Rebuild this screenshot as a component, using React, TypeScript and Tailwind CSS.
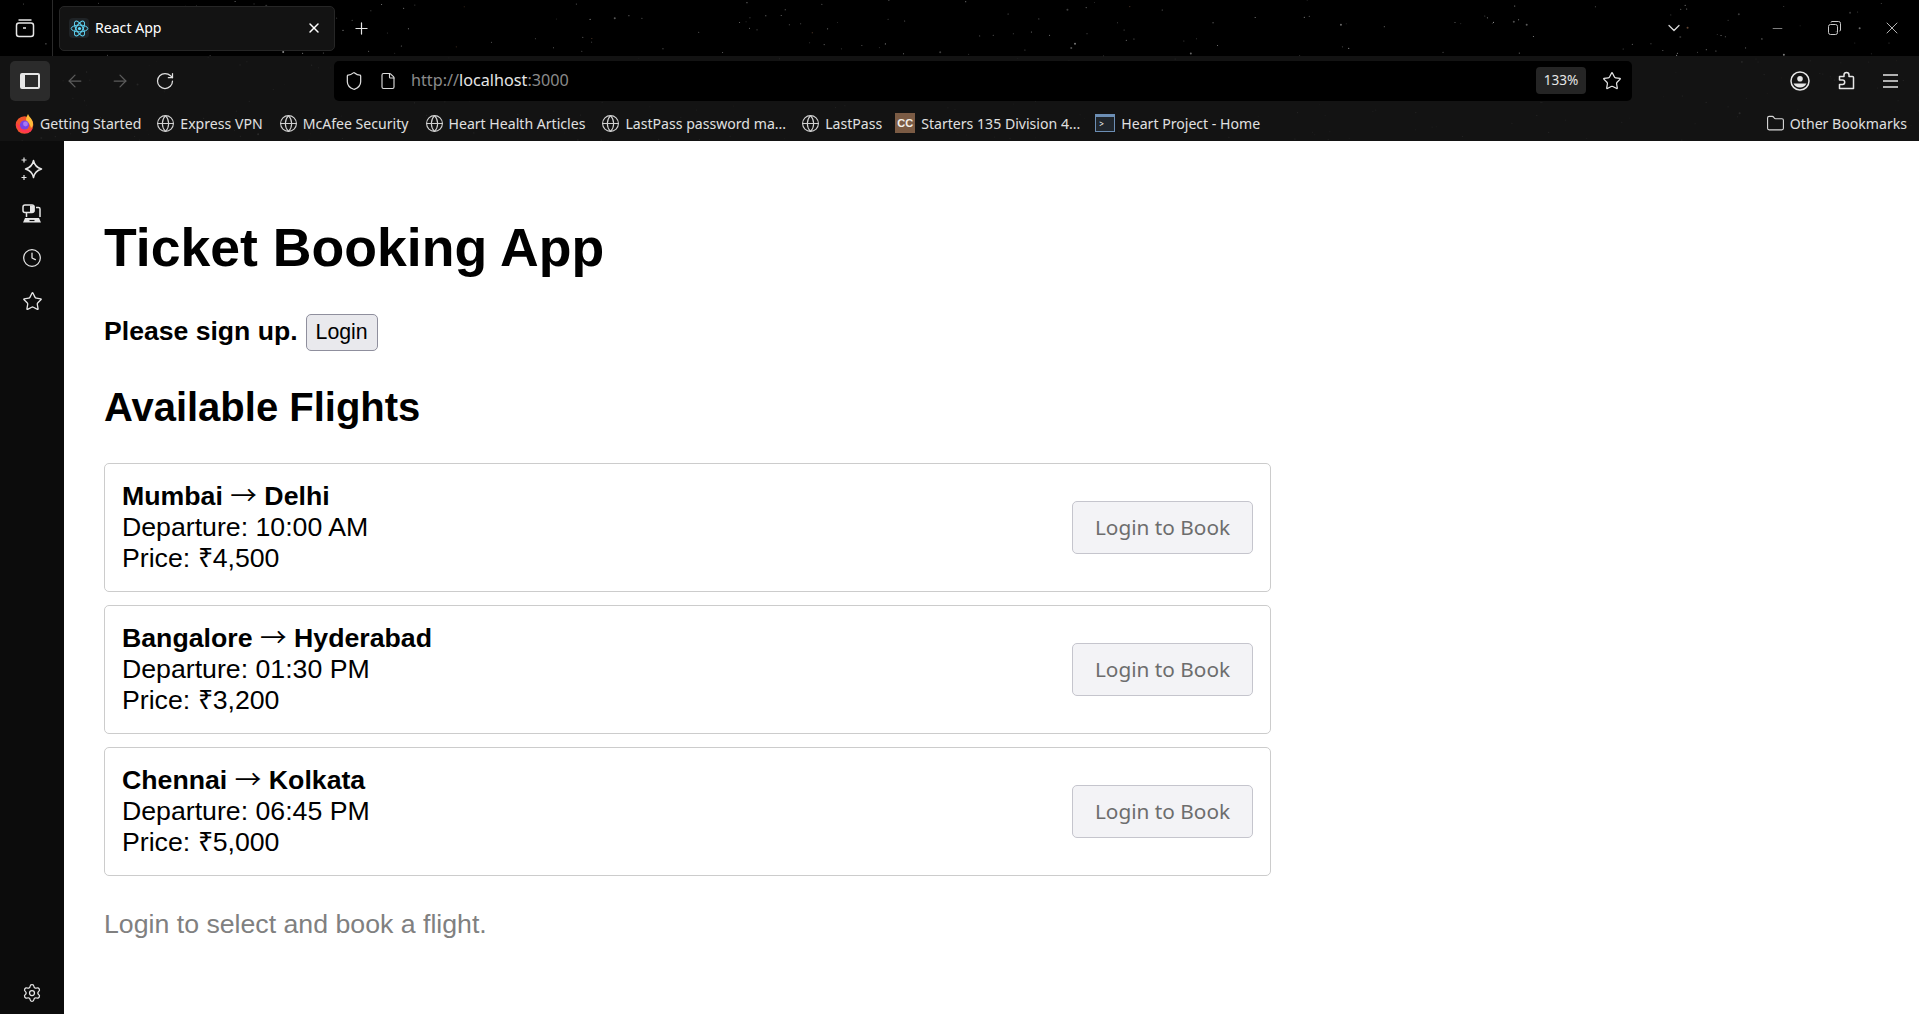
import React from "react";
import {
  ArrowLeft,
  ArrowRight,
  ChevronDown,
  Clock,
  File,
  Folder,
  Globe,
  Minus,
  Plus,
  RotateCw,
  Settings,
  Shield,
  Star,
  X,
} from "lucide-react";

const FLIGHTS = [
  { from: "Mumbai", to: "Delhi", time: "10:00 AM", price: "₹4,500" },
  { from: "Bangalore", to: "Hyderabad", time: "01:30 PM", price: "₹3,200" },
  { from: "Chennai", to: "Kolkata", time: "06:45 PM", price: "₹5,000" },
];

const BOOKMARKS = [
  { label: "Express VPN", gap: "ml-[15px]" },
  { label: "McAfee Security", gap: "ml-[16px]" },
  { label: "Heart Health Articles", gap: "ml-[16px]" },
  { label: "LastPass password ma...", gap: "ml-[16px]" },
  { label: "LastPass", gap: "ml-[15px]" },
];

// deterministic starfield for the browser theme
function stars() {
  const out: { x: number; y: number; r: number; o: number; warm: boolean }[] = [];
  let seed = 1337;
  const rnd = () => {
    seed = (seed * 16807) % 2147483647;
    return seed / 2147483647;
  };
  for (let i = 0; i < 420; i++) {
    out.push({
      x: rnd() * 1919,
      y: rnd() * 141,
      r: rnd() > 0.92 ? 1 : 0.55,
      o: 0.15 + rnd() * 0.45,
      warm: rnd() > 0.95,
    });
  }
  return out;
}

function Starfield() {
  return (
    <svg className="absolute inset-0 w-full h-[141px]" viewBox="0 0 1919 141">
      {stars().map((s, i) => (
        <circle key={i} cx={s.x} cy={s.y} r={s.r} fill={s.warm ? "#e09a70" : "#ffffff"} opacity={s.o} />
      ))}
    </svg>
  );
}

function ReactLogo() {
  return (
    <div className="w-5 h-5 rounded bg-[#1f2326] flex items-center justify-center shrink-0">
      <svg width="19" height="19" viewBox="-12 -12 24 24" fill="none" stroke="#61dafb" strokeWidth="1.2">
        <circle r="2" fill="#61dafb" stroke="none" />
        <ellipse rx="10.5" ry="4.2" />
        <ellipse rx="10.5" ry="4.2" transform="rotate(60)" />
        <ellipse rx="10.5" ry="4.2" transform="rotate(120)" />
      </svg>
    </div>
  );
}

function FirefoxLogo() {
  return (
    <svg width="19" height="21" viewBox="0 0 19 21" className="shrink-0">
      <circle cx="9.5" cy="12" r="8.8" fill="#f2552c" />
      <path d="M13 1c1 3 5 5 5 10 0 2-1 3-2 4-1-5-4-6-5-8 0-2 1-4 2-6z" fill="#ffbd3a" />
      <path d="M1 10c1 6 5 10 10 10 3 0 6-2 7-5-3 3-9 3-12-1-2-2-3-3-5-4z" fill="#ff3750" />
      <circle cx="9.5" cy="12" r="4.6" fill="#7542e5" />
      <circle cx="10.5" cy="11" r="2.4" fill="#a678f5" />
    </svg>
  );
}

function SyncedTabsIcon() {
  return (
    <svg width="20" height="20" viewBox="0 0 20 20" fill="none" stroke="#e6e6e6" strokeWidth="1.5">
      <rect x="1" y="1" width="11" height="7.500" rx="2" />
      <path d="M8 1.500h3.500a1 1 0 0 1 1 1v4.500a1 1 0 0 1-1 1H8z" fill="#e6e6e6" stroke="none" />
      <path d="M14 3.500h2.500a1.500 1.500 0 0 1 1.500 1.500v8" />
      <path d="M4.500 9v4" />
      <path d="M3 14h14l2 4.500H1z" fill="#e6e6e6" stroke="none" />
      <path d="M7.500 16.500h5" stroke="#0c0c0c" strokeWidth="1.200" />
    </svg>
  );
}

function AiIcon() {
  return (
    <svg width="22" height="24" viewBox="0 0 22 24" fill="none" stroke="#e6e6e6" strokeWidth="1.500" strokeLinejoin="round">
      <path d="M12.500 3.500c.8 4.200 2.800 7 8 8.500-5.200 1.500-7.200 4.300-8 8.500-.8-4.200-2.800-7-8-8.500 5.200-1.500 7.200-4.300 8-8.500z" />
      <path d="M3 .5v5M.5 3h5M3 18v5M.5 20.500h5" strokeWidth="1.200" />
    </svg>
  );
}

function AccountIcon() {
  return (
    <svg width="20" height="20" viewBox="0 0 20 20" fill="none" className="shrink-0">
      <circle cx="10" cy="10" r="9" stroke="#e6e6e6" strokeWidth="1.500" />
      <circle cx="10" cy="7.800" r="2.800" fill="#e6e6e6" />
      <path d="M3.500 12.500h13a7.200 7.200 0 0 1-13 0z" fill="#e6e6e6" />
    </svg>
  );
}

function PuzzleIcon() {
  return (
    <svg width="17" height="19" viewBox="0 0 17 19" fill="none" stroke="#e6e6e6" strokeWidth="1.500" strokeLinejoin="round" className="shrink-0">
      <path d="M1.500 17.500v-4h3a2.200 2.200 0 0 0 0-4.400h-3V5.500H6V4a2.500 2.500 0 0 1 5 0v1.500h3.500a1 1 0 0 1 1 1v11z" />
    </svg>
  );
}

function MenuIcon() {
  return (
    <svg width="15" height="14" viewBox="0 0 15 14" stroke="#e6e6e6" strokeWidth="1.500" className="shrink-0">
      <path d="M0 1h15M0 7h15M0 13h15" />
    </svg>
  );
}

function RestoreIcon() {
  return (
    <svg width="13" height="14" viewBox="0 0 13 14" fill="none" stroke="#c8c8c8" strokeWidth="1">
      <rect x="0.500" y="3.500" width="9" height="10" rx="2" />
      <path d="M3 1.500 a1 1 0 0 1 1-1h6.500a2 2 0 0 1 2 2V9a1 1 0 0 1-1 1" />
    </svg>
  );
}

function Bookmark({ label, gap }: { label: string; gap: string }) {
  return (
    <div className={`flex items-center gap-[5px] ${gap}`}>
      <Globe size={19} strokeWidth={1.400} className="text-[#d0d0d0] shrink-0" />
      <span className="whitespace-nowrap">{label}</span>
    </div>
  );
}

function FlightCard({ from, to, time, price }: { from: string; to: string; time: string; price: string }) {
  return (
    <div className="flex items-center justify-between h-[129px] border border-[#cccccc] rounded-[5px] px-[17px] mb-[13px]">
      <div className="text-[26.7px] leading-[31px] text-black">
        <div className="font-bold">
          {from} <span className="font-['Noto_Sans_CJK_SC',sans-serif] font-normal leading-[0]">→</span> {to}
        </div>
        <div>Departure: {time}</div>
        <div>Price: {price}</div>
      </div>
      <button className="w-[181px] h-[53px] bg-[#f3f3f6] border border-[#c5c5cd] rounded-[5px] text-[20.800px] text-[#6d6d6d] font-['Noto_Sans',sans-serif]">
        Login to Book
      </button>
    </div>
  );
}

export default function App() {
  return (
    <div className="h-screen overflow-hidden flex flex-col bg-white font-['Liberation_Sans',Arial,sans-serif]">
      <div className="relative bg-black shrink-0 h-[141px] flex flex-col text-white font-['Noto_Sans',sans-serif]">
        <Starfield />

        {/* tab strip */}
        <div className="relative h-[56px] flex items-center shrink-0">
          <div className="w-[53px] flex justify-center pr-[2px] border-r border-[#2a2a2a] h-full items-center">
            <svg width="20" height="20" viewBox="0 0 20 20" fill="none" stroke="#e6e6e6" strokeWidth="1.500">
              <rect x="1.500" y="5" width="17" height="13.500" rx="2.500" />
              <path d="M3.500 2h13M8 10h3" />
            </svg>
          </div>
          <div className="ml-[6px] w-[276px] h-[45px] bg-[#131313] border border-[#262626] rounded-[5px] flex items-center pl-[9px] pr-[12px]">
            <ReactLogo />
            <span className="ml-[6px] text-[14.100px] text-white">React App</span>
            <X size={16} strokeWidth={2.200} className="ml-auto text-white" />
          </div>
          <Plus size={19} strokeWidth={1.500} className="ml-[17px] text-[#e6e6e6]" />
          <ChevronDown size={20} strokeWidth={1.500} className="ml-auto text-[#d8d8d8]" />
          <Minus size={15} strokeWidth={1} className="ml-[86px] text-[#c8c8c8]" />
          <div className="ml-[43px]">
            <RestoreIcon />
          </div>
          <X size={20} strokeWidth={1} className="ml-[41px] mr-[17px] text-[#d8d8d8]" />
        </div>

        {/* nav toolbar */}
        <div className="relative h-[49px] bg-[#161616]/85 flex items-center shrink-0">
          <div className="ml-[10px] w-[40px] h-[40px] bg-[#2b2b2b] rounded-[5px] flex items-center justify-center">
            <div className="w-[20px] h-[16px] border-2 border-[#e6e6e6] border-l-[5px] rounded-[2px]"></div>
          </div>
          <ArrowLeft size={20} strokeWidth={1.500} className="ml-[15px] text-[#5c5c5c]" />
          <ArrowRight size={20} strokeWidth={1.500} className="ml-[25px] text-[#5c5c5c]" />
          <RotateCw size={20} strokeWidth={1.500} className="ml-[25px] text-[#e0e0e0]" />
          <div className="ml-[159px] w-[1298px] h-[40px] bg-black rounded-[5px] flex items-center pl-[10px] pr-[10px]">
            <Shield size={20} strokeWidth={1.500} className="text-[#dcdcdc]" />
            <File size={18} strokeWidth={1.500} className="ml-[15px] text-[#dcdcdc]" />
            <span className="ml-[14px] text-[16.200px] text-[#8a8a8a]">
              http://<span className="text-[#e6e6e6]">localhost</span>:3000
            </span>
            <span className="ml-auto w-[50px] h-[27px] bg-[#252525] rounded flex items-center justify-center text-[13.600px] text-[#e6e6e6]">
              133%
            </span>
            <Star size={20} strokeWidth={1.500} className="ml-[16px] text-[#e6e6e6]" />
          </div>
          <div className="ml-auto flex items-center pr-[21px]">
            <AccountIcon />
            <div className="ml-[28px]">
              <PuzzleIcon />
            </div>
            <div className="ml-[28px]">
              <MenuIcon />
            </div>
          </div>
        </div>

        {/* bookmarks */}
        <div className="relative flex-1 bg-[#161616]/85 flex items-center pl-[15px] pr-[12px] pt-[1px] text-[14.100px] text-[#e0e0e0]">
          <div className="flex items-center gap-[6px]">
            <FirefoxLogo />
            <span className="whitespace-nowrap">Getting Started</span>
          </div>
          {BOOKMARKS.map((b) => (
            <Bookmark key={b.label} label={b.label} gap={b.gap} />
          ))}
          <div className="flex items-center gap-[6px] ml-[13px]">
            <div className="w-5 h-5 bg-[#7b5b44] text-[#f3efe9] font-['Liberation_Sans',sans-serif] font-bold text-[11px] flex items-center justify-center">
              CC
            </div>
            <span className="whitespace-nowrap">Starters 135 Division 4...</span>
          </div>
          <div className="flex items-center gap-[6px] ml-[15px]">
            <div className="w-5 h-[18px] bg-[#20262c] border-t-[3px] border-x border-b border-[#6c8eb4] flex items-center pl-[3px] text-[8px] leading-none text-white">
              &gt;
            </div>
            <span className="whitespace-nowrap">Heart Project - Home</span>
          </div>
          <div className="ml-auto flex items-center gap-[5px]">
            <Folder size={19} strokeWidth={1.400} className="text-[#d8d8d8]" />
            <span className="whitespace-nowrap">Other Bookmarks</span>
          </div>
        </div>
      </div>

      <div className="flex-1 flex min-h-0">
        <aside className="w-[64px] shrink-0 bg-[#0c0c0c] flex flex-col items-center pt-[16px] pb-[11px]">
          <div className="h-[24px] flex items-center">
            <AiIcon />
          </div>
          <div className="mt-[23px] h-[20px]">
            <SyncedTabsIcon />
          </div>
          <Clock size={20} strokeWidth={1.500} className="mt-[24px] text-[#e6e6e6]" />
          <Star size={21} strokeWidth={1.500} className="mt-[23px] text-[#e6e6e6]" />
          <Settings size={20} strokeWidth={1.500} className="mt-auto text-[#e6e6e6]" />
        </aside>

        <main className="flex-1 pl-[40px] pt-[76px]">
          <div className="w-[1167px]">
            <h1 className="text-[53.600px] leading-[61px] font-bold text-black">Ticket Booking App</h1>
            <div className="mt-[34px] flex items-center h-[40px]">
              <h3 className="text-[26.600px] font-bold text-black">Please sign up.</h3>
              <button className="ml-[8px] w-[72px] h-[37px] bg-[#e9e9ed] border border-[#8f8f9d] rounded-[5px] text-[21.300px] pt-[2px] text-black">
                Login
              </button>
            </div>
            <h2 className="mt-[32px] text-[40px] leading-[46px] font-bold text-black">Available Flights</h2>
            <div className="mt-[33px]">
              {FLIGHTS.map((f) => (
                <FlightCard key={f.from} from={f.from} to={f.to} time={f.time} price={f.price} />
              ))}
            </div>
            <p className="mt-[33px] text-[26.700px] leading-[31px] text-[#808080]">Login to select and book a flight.</p>
          </div>
        </main>
      </div>
    </div>
  );
}
